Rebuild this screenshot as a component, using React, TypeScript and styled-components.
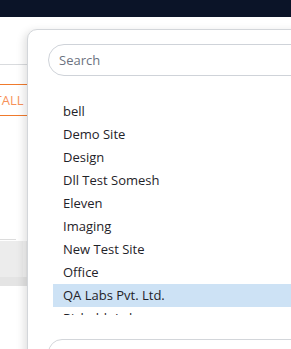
import styled, { createGlobalStyle } from "styled-components";

const GlobalStyle = createGlobalStyle`
  html, body {
    margin: 0;
    padding: 0;
    background: #ffffff;
    font-family: "Open Sans", "Liberation Sans", sans-serif;
  }
`;

const sites = [
  "bell",
  "Demo Site",
  "Design",
  "Dll Test Somesh",
  "Eleven",
  "Imaging",
  "New Test Site",
  "Office",
  "QA Labs Pvt. Ltd.",
  "Rishabh Labs",
  "Sample Site",
];

export default function App() {
  return (
    <>
      <GlobalStyle />
      <Screen>
        <TopBar />
        <PageBody>
          <Divider />
          <InstallButton>INSTALL</InstallButton>
          <TableHead />
          <TableRow>
            <Cell />
            <CellEdge />
          </TableRow>
          <TableFooter />
        </PageBody>

        <Dropdown>
          <SearchBox placeholder="Search" />
          <List>
            {sites.map((name) => (
              <Item key={name} $active={name === "QA Labs Pvt. Ltd."}>
                {name}
              </Item>
            ))}
          </List>
          <FooterBox />
        </Dropdown>
      </Screen>
    </>
  );
}

const Screen = styled.div({
  position: "relative",
  width: "291px",
  height: "349px",
  overflow: "hidden",
  background: "#ffffff",
});

const TopBar = styled.div({
  height: "17px",
  background: "#0b1428",
});

const PageBody = styled.div({
  display: "flex",
  flexDirection: "column",
  width: "200px",
});

const Divider = styled.div({
  marginTop: "47px",
  height: "1px",
  background: "#d9dbde",
});

const InstallButton = styled.div({
  marginTop: "19px",
  marginLeft: "-26px",
  height: "30px",
  borderTop: "1px solid #f07a2c",
  borderBottom: "1px solid #f07a2c",
  color: "#f7925a",
  fontSize: "13px",
  lineHeight: "30px",
});

const TableHead = styled.div({
  marginTop: "123px",
  width: "16px",
  height: "1px",
  background: "#dcdcdc",
});

const TableRow = styled.div({
  marginTop: "1px",
  display: "flex",
  height: "36px",
  background: "#ececec",
});

const Cell = styled.div({
  width: "23px",
});

const CellEdge = styled.div({
  width: "3px",
  background: "#f2f2f2",
});

const TableFooter = styled.div({
  height: "9px",
  background: "#e4e4e4",
});

const Dropdown = styled.div({
  position: "absolute",
  left: "27px",
  top: "29px",
  width: "300px",
  height: "360px",
  boxSizing: "border-box",
  background: "#ffffff",
  border: "1px solid #d3d6da",
  borderRadius: "10px",
  boxShadow: "-3px 2px 8px rgba(0, 0, 0, 0.12)",
  padding: "14px 0 0 20px",
  display: "flex",
  flexDirection: "column",
});

const SearchBox = styled.input({
  boxSizing: "border-box",
  height: "32px",
  width: "290px",
  border: "1px solid #cfd3d9",
  borderRadius: "16px",
  padding: "0 10px",
  fontFamily: "\"Open Sans\", \"Liberation Sans\", sans-serif",
  fontSize: "13px",
  outline: "none",
  "&::placeholder": {
    color: "#6b7280",
  },
});

const List = styled.div({
  marginTop: "24px",
  marginLeft: "5px",
  height: "215px",
  overflow: "hidden",
  display: "flex",
  flexDirection: "column",
});

const Item = styled.div<{ $active?: boolean }>(({ $active }) => ({
  flexShrink: 0,
  height: "23px",
  lineHeight: "23px",
  paddingLeft: "10px",
  fontSize: "13px",
  color: "#1f2329",
  background: $active ? "#cde2f5" : "transparent",
}));

const FooterBox = styled.div({
  marginTop: "24px",
  height: "32px",
  width: "290px",
  boxSizing: "border-box",
  border: "1px solid #d3d6da",
  borderRadius: "14px",
});
